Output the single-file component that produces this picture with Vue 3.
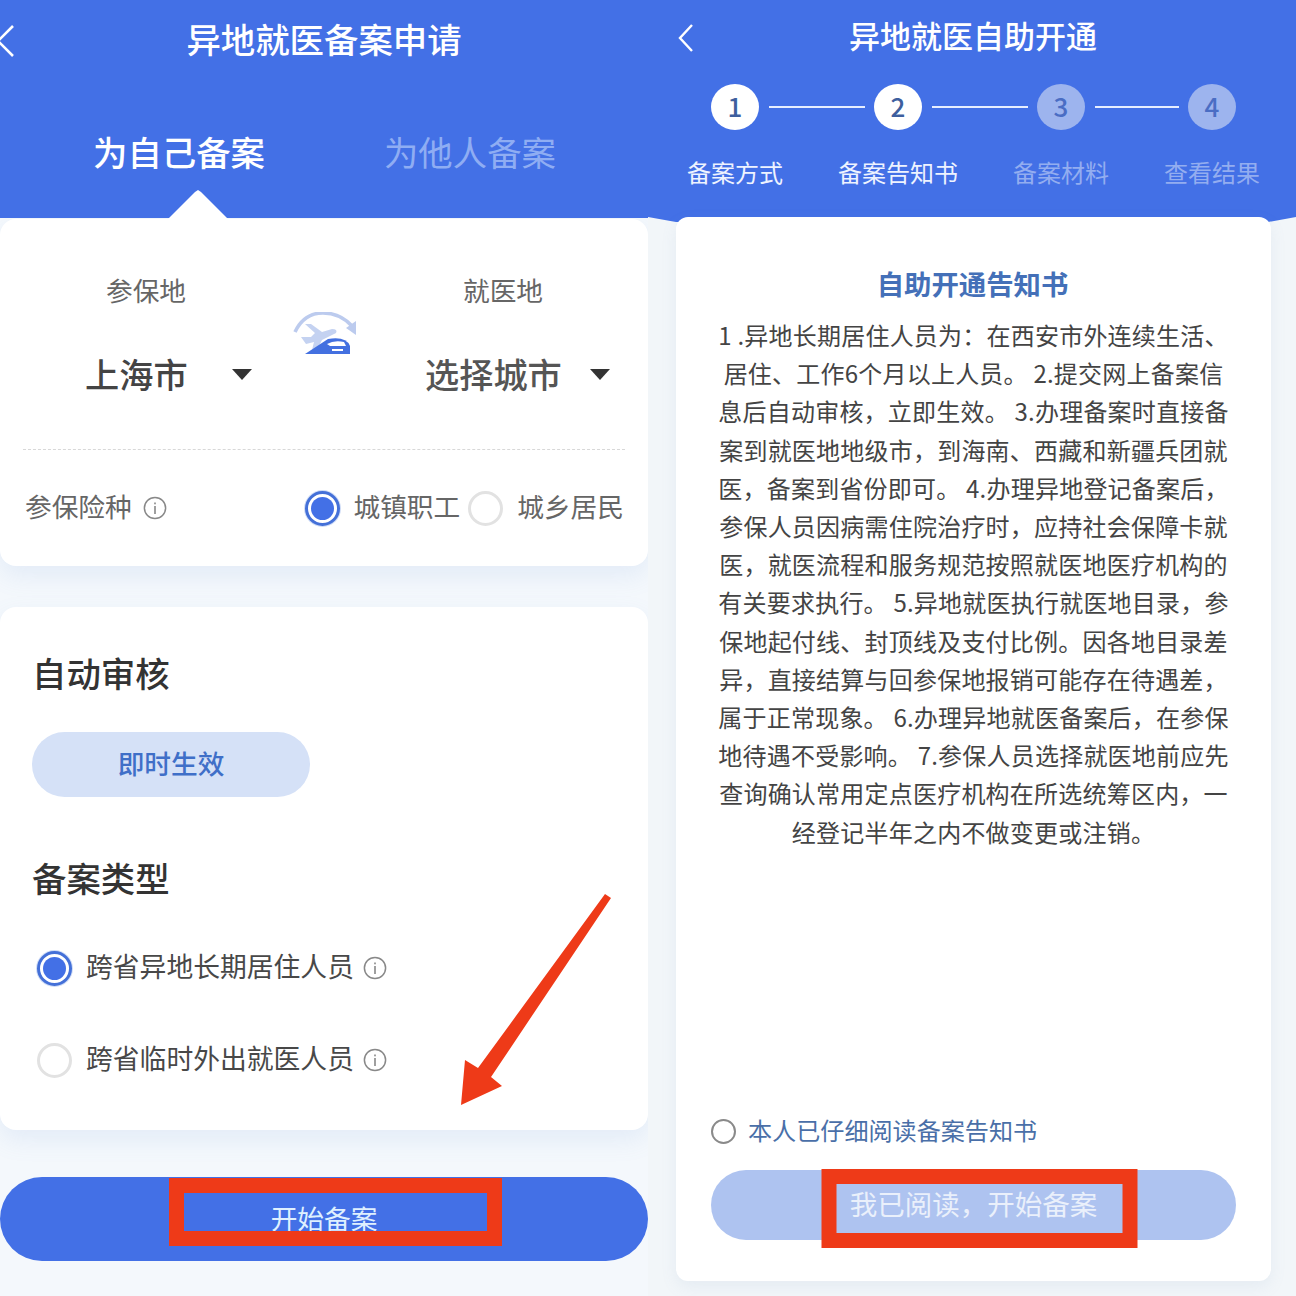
<script setup>
const steps = [
  { n: 1, on: true },
  { n: 2, on: true },
  { n: 3, on: false },
  { n: 4, on: false },
]
const stepLabels = [
  { t: '备案方式', on: true, w: 'w4' },
  { t: '备案告知书', on: true, w: 'w5' },
  { t: '备案材料', on: false, w: 'w4' },
  { t: '查看结果', on: false, w: 'w4' },
]
const lines = [
  '1 .异地长期居住人员为：在西安市外连续生活、',
  '居住、工作6个月以上人员。 2.提交网上备案信',
  '息后自动审核，立即生效。 3.办理备案时直接备',
  '案到就医地地级市，到海南、西藏和新疆兵团就',
  '医，备案到省份即可。 4.办理异地登记备案后，',
  '参保人员因病需住院治疗时，应持社会保障卡就',
  '医，就医流程和服务规范按照就医地医疗机构的',
  '有关要求执行。 5.异地就医执行就医地目录，参',
  '保地起付线、封顶线及支付比例。因各地目录差',
  '异，直接结算与回参保地报销可能存在待遇差，',
  '属于正常现象。 6.办理异地就医备案后，在参保',
  '地待遇不受影响。 7.参保人员选择就医地前应先',
  '查询确认常用定点医疗机构在所选统筹区内，一',
  '经登记半年之内不做变更或注销。',
]
</script>

<template>
  <div class="root">
    <section class="panel left">
      <header class="lhead">
        <svg class="lback" viewBox="0 0 14 32" width="14" height="32"><path d="M13 1 L-2 16 L13 31" fill="none" stroke="#fff" stroke-width="2.6" /></svg>
        <h1 class="ltitle">异地就医备案申请</h1>
        <div class="tabs">
          <span class="tab active">为自己备案</span>
          <span class="tab">为他人备案</span>
        </div>
      </header>

      <div class="card c1">
        <div class="cities">
          <div class="city c-a">
            <div class="clabel la">参保地</div>
            <div class="cselect"><span>上海市</span><i class="caret ca"></i></div>
          </div>
          <svg class="swap" viewBox="31 12 66 48" width="66" height="48">
            <path d="M35 32 Q44 13 63 13 Q80 13 92 26" fill="none" stroke="#bccbee" stroke-width="3.6" />
            <path d="M96 21 L96 35 L86 28 Z" fill="#bccbee" />
            <path d="M41 37 L51 37 L55 33 L45 24 L51 24 L62 32 L72 29 Q78 29 76 33 L62 40 L58 48 L52 50 L54 42 L46 44 Z" fill="#c4d2f1" />
            <path d="M45 54 L68 39 Q86 36 90 46 L90 54 Z" fill="#4370e0" />
            <path d="M67 44 Q74 40 84 42 L86 46 L70 46 Z" fill="#fff" />
            <rect x="72" y="49" width="11" height="2" fill="#fff" />
          </svg>
          <div class="city c-b">
            <div class="clabel lb">就医地</div>
            <div class="cselect"><span>选择城市</span><i class="caret cb"></i></div>
          </div>
        </div>
        <div class="dash"></div>
        <div class="insure">
          <span class="txt">参保险种</span>
          <svg class="info i1" viewBox="0 0 24 24" width="24" height="24"><circle cx="12" cy="12" r="10.6" fill="none" stroke="#888" stroke-width="1.5" /><rect x="11.2" y="10" width="1.6" height="8" fill="#888" /><rect x="11.2" y="6.5" width="1.6" height="1.8" fill="#888" /></svg>
          <span class="grow"></span>
          <i class="radio on"></i>
          <span class="txt t1">城镇职工</span>
          <i class="radio r2"></i>
          <span class="txt t1">城乡居民</span>
        </div>
      </div>

      <div class="card c2">
        <h2 class="sec">自动审核</h2>
        <div class="pill">即时生效</div>
        <h2 class="sec s2">备案类型</h2>
        <div class="opt o1">
          <i class="radio on"></i>
          <span class="txt dark">跨省异地长期居住人员</span>
          <svg class="info" viewBox="0 0 24 24" width="24" height="24"><circle cx="12" cy="12" r="10.6" fill="none" stroke="#888" stroke-width="1.5" /><rect x="11.2" y="10" width="1.6" height="8" fill="#888" /><rect x="11.2" y="6.5" width="1.6" height="1.8" fill="#888" /></svg>
        </div>
        <div class="opt o2">
          <i class="radio"></i>
          <span class="txt dark">跨省临时外出就医人员</span>
          <svg class="info" viewBox="0 0 24 24" width="24" height="24"><circle cx="12" cy="12" r="10.6" fill="none" stroke="#888" stroke-width="1.5" /><rect x="11.2" y="10" width="1.6" height="8" fill="#888" /><rect x="11.2" y="6.5" width="1.6" height="1.8" fill="#888" /></svg>
        </div>
      </div>

      <button class="start">开始备案</button>
    </section>

    <section class="panel right">
      <header class="rhead">
        <svg class="rback" viewBox="0 0 16 28" width="16" height="28"><path d="M14 1 L2 14 L14 27" fill="none" stroke="#fff" stroke-width="2.4" /></svg>
        <h1 class="rtitle">异地就医自助开通</h1>
        <div class="track">
          <template v-for="(s, i) in steps" :key="s.n">
            <span class="dot" :class="{ on: s.on }">{{ s.n }}</span>
            <span v-if="i < 3" class="bar" :class="{ short: i === 2 }"></span>
          </template>
        </div>
        <div class="slabels">
          <span v-for="l in stepLabels" :key="l.t" class="slabel" :class="[l.w, { on: l.on }]">{{ l.t }}</span>
        </div>
      </header>

      <div class="notice">
        <h3 class="ntitle">自助开通告知书</h3>
        <div class="ntext">
          <div v-for="l in lines" :key="l" class="nline">{{ l }}</div>
        </div>
        <div class="grow"></div>
        <div class="agree"><i class="rsmall"></i><span>本人已仔细阅读备案告知书</span></div>
        <button class="read">我已阅读，开始备案</button>
      </div>
    </section>

    <svg class="marks" viewBox="0 0 1296 1296" width="1296" height="1296">
      <polygon points="605,894 611,898 491,1077 502,1086 461,1105 465,1060 478,1068" fill="#ee3a18" />
      <rect x="176.5" y="1185.5" width="318" height="53" fill="none" stroke="#ee3a18" stroke-width="15" />
      <rect x="829" y="1176.5" width="301" height="64" fill="none" stroke="#ee3a18" stroke-width="15" />
    </svg>
  </div>
</template>

<style>
html, body { margin: 0; background: #fff; }
</style>

<style scoped>
.root {
  position: relative;
  width: 1296px;
  height: 1296px;
  display: flex;
  overflow: hidden;
  font-family: "Noto Sans CJK SC", "Noto Sans", sans-serif;
  color: #333;
}
.panel { width: 648px; height: 1296px; display: flex; flex-direction: column; flex: none; }
.left { background: #f4f8fc; }
.right { background: #f2f6f9; }
h1, h2, h3 { margin: 0; }
i { display: block; flex: none; }
.grow { flex: 1; }
.txt { font-size: 26.7px; line-height: 36px; padding-bottom: 4px; color: #666; }
.txt.dark { color: #484848; font-size: 26.8px; }

.lhead { position: relative; height: 218px; flex: none; background: #4370e6; box-sizing: border-box; padding-top: 14px; }
.lback { position: absolute; left: 0; top: 25px; }
.ltitle { font-size: 34.4px; line-height: 48px; font-weight: 500; color: #fff; text-align: center; }
.tabs { display: flex; gap: 119px; padding-left: 93px; margin-top: 65px; }
.tab { font-size: 34.4px; line-height: 48px; color: #8fadf3; }
.tab.active { color: #fff; font-weight: 500; }
.lhead::after {
  content: "";
  position: absolute;
  left: 168px;
  bottom: -1px;
  width: 60px;
  height: 29px;
  background: #fff;
  clip-path: polygon(0 100%, 27px 2px, 30px 0, 33px 2px, 100% 100%);
}

.card { background: #fff; border-radius: 16px; box-shadow: 0 10px 24px rgba(110, 150, 210, .12); }
.c1 { padding: 53px 23px 38px; margin-top: 1px; }
.cities { display: flex; padding-left: 62px; }
.city { display: flex; flex-direction: column; }
.c-a { width: 167px; margin-right: 39px; }
.c-b { margin-left: 68px; }
.clabel { font-size: 26.7px; line-height: 36px; color: #666; }
.la { margin-left: 21px; }
.lb { margin-left: 38px; }
.cselect { display: flex; align-items: center; margin-top: 43px; height: 44px; font-size: 34.2px; font-weight: 500; color: #444; white-space: nowrap; }
.c-b .cselect { color: #555; }
.caret { width: 0; height: 0; border-left: 10px solid transparent; border-right: 10px solid transparent; border-top: 11px solid #333; margin-top: 3px; }
.ca { margin-left: 44px; }
.cb { margin-left: 28px; }
.swap { margin-top: 40px; flex: none; }
.dash { margin-top: 54px; border-top: 1.5px dashed #d8d8d8; }
.insure { display: flex; align-items: center; margin-top: 38px; padding-left: 2px; padding-right: 1px; }
.i1 { margin-left: 11px; }
.t1 { margin-left: 14px; }
.r2 { margin-left: 8px; }

.radio { position: relative; width: 35px; height: 35px; box-sizing: border-box; border-radius: 50%; border: 3px solid #e2e2e2; background: #fff; }
.radio.on { border: 3px solid #4470d8; box-shadow: 0 0 0 1px #cfdcf6; }
.radio.on::after { content: ""; position: absolute; inset: 3px; border-radius: 50%; background: #4370e6; }

.c2 { margin-top: 41px; padding: 43px 32px 52px; height: 523px; box-sizing: border-box; }
.sec { font-size: 34.4px; line-height: 44px; font-weight: 500; color: #333; }
.pill { width: 278px; height: 65px; margin-top: 38px; border-radius: 33px; background: #d5e1f7; color: #3f6fc8; font-size: 26.7px; font-weight: 500; display: flex; align-items: center; justify-content: center; box-sizing: border-box; padding-bottom: 4px; }
.s2 { margin-top: 58px; }
.opt { display: flex; align-items: center; margin-left: 5px; }
.opt .txt { margin-left: 14px; }
.opt .info { margin-left: 9px; }
.o1 { margin-top: 49px; }
.o2 { margin-top: 52px; }

.start { display: block; margin-top: 47px; width: 648px; height: 84px; border: 0; padding: 0 0 4px; border-radius: 42px; background: #4370e6; color: #dff0ff; font-family: inherit; font-size: 26.7px; }

.rhead { position: relative; height: 222px; flex: none; background: #4370e6; box-sizing: border-box; padding-top: 12px; clip-path: polygon(0 0, 100% 0, 100% 217px, 620px 222px, 28px 222px, 0 217px); }
.rback { position: absolute; left: 30px; top: 24px; }
.rtitle { font-size: 31px; line-height: 46px; font-weight: 500; color: #fff; text-align: center; margin-left: 2px; }
.track { display: flex; align-items: center; gap: 9.5px; padding-left: 63px; margin-top: 26px; }
.dot { width: 48px; height: 46px; flex: none; box-sizing: border-box; padding-bottom: 3px; border-radius: 50%; background: #9db4ee; color: #4a6dc4; font-size: 26px; font-weight: 500; display: flex; align-items: center; justify-content: center; }
.dot.on { background: #fff; color: #3e5f9e; }
.bar { width: 96px; height: 2.5px; background: #e6eeff; flex: none; }
.bar.short { width: 84px; }
.slabels { display: flex; gap: 55px; padding-left: 39px; margin-top: 25px; }
.slabel { font-size: 24px; line-height: 34px; color: #93adf0; white-space: nowrap; text-align: center; }
.slabel.on { color: #eef3ff; }

.notice { flex: 1; margin: -5px 25px 15px 28px; background: #fff; border-radius: 12px; box-shadow: 0 6px 16px rgba(120, 150, 190, .1); padding: 48px 35px 41px; display: flex; flex-direction: column; position: relative; }
.ntitle { font-size: 27.4px; line-height: 36px; font-weight: 700; color: #4470b8; text-align: center; margin-right: 2px; }
.ntext { margin-top: 15px; }
.nline { font-size: 24px; letter-spacing: .22px; line-height: 38.2px; color: #444; text-align: center; white-space: nowrap; }
.agree { display: flex; align-items: center; gap: 12px; height: 40px; font-size: 24.1px; color: #4a6fa8; }
.agree span { padding-bottom: 4px; }
.rsmall { width: 25px; height: 25px; box-sizing: border-box; border-radius: 50%; border: 2px solid #8a8a8a; }
.read { display: block; margin-top: 19px; width: 525px; height: 70px; border: 0; padding: 0 0 4px; border-radius: 35px; background: #aec3f0; color: #eaf0fb; font-family: inherit; font-size: 27.5px; }

.marks { position: absolute; left: 0; top: 0; pointer-events: none; }
</style>
